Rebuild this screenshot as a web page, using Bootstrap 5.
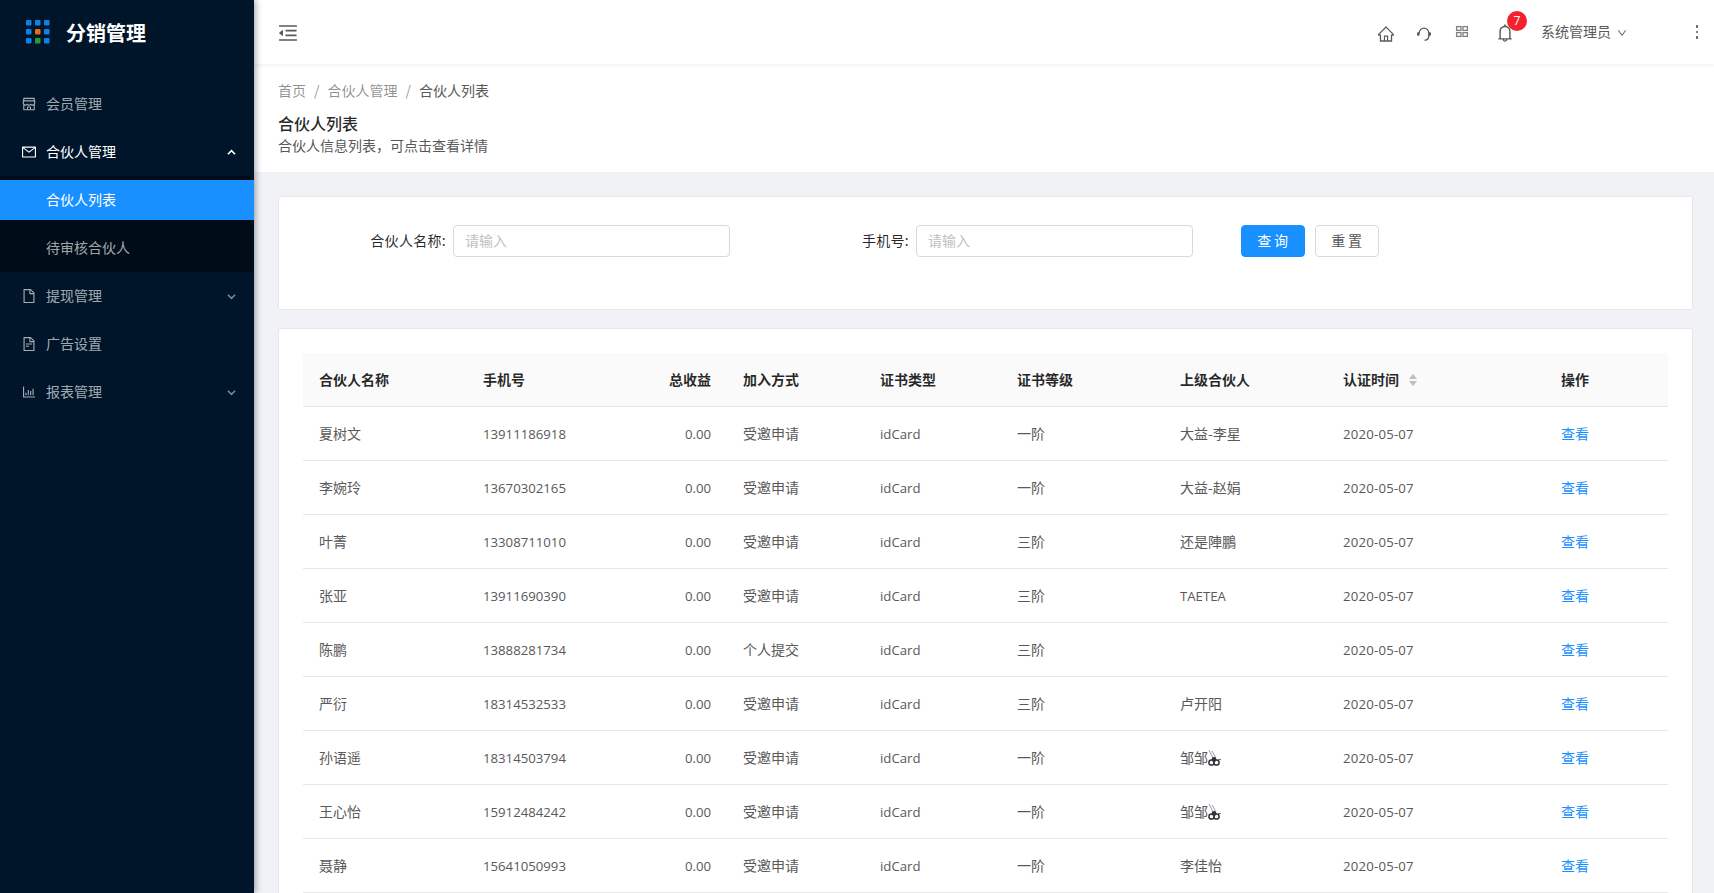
<!doctype html>
<html lang="zh"><head><meta charset="utf-8"><title>合伙人列表</title>
<link rel="stylesheet" href="https://cdn.jsdelivr.net/npm/bootstrap@5.3.0/dist/css/bootstrap.min.css">
<style>
html,body{height:100%;overflow:hidden}
body{font-family:"Noto Sans CJK SC",sans-serif;font-size:14px;color:#595959;background:#f0f2f5;line-height:21px}
.shell{height:100vh;overflow:hidden}
.side{width:254px;flex:none;background:#001529;box-shadow:2px 0 6px rgba(0,21,41,.35);position:relative;z-index:3;color:rgba(255,255,255,.65)}
.brand{height:64px;padding-left:26px;margin-bottom:16px;color:#fff;font-size:20px;font-weight:700}
.brand svg{margin-right:16px}
.mi{height:48px;padding-left:22px;padding-right:18px}
.mi>svg:first-child{width:14px;height:14px;margin-right:10px;fill:currentColor}
.mi span{margin-top:-2px}
.chev{width:9px;height:9px;margin-left:auto;opacity:.75}
.mi.open .chev{opacity:1}
.mi.open{color:#fff}
.subm{background:#000c17;padding:4px 0}
.si{height:40px;padding-left:46px;padding-bottom:2px;margin-bottom:8px}
.si:last-child{margin-bottom:0}
.si.on{background:#1890ff;color:#fff}
.main{min-width:0}
.topb{height:64px;background:#fff;box-shadow:0 1px 4px rgba(0,21,41,.08);position:relative;z-index:2;padding-left:24px}
.topb svg{fill:#595959}
.tog{margin-top:2px}
.tb-i{width:38px}
.tb-i svg{width:16px;height:16px}
.tb-down{margin-top:4px}
.tb-b{width:48px;margin-top:2px}
.tb-b svg{width:18px;height:18px}
.cnt{top:-13px;left:26px;width:20px;height:20px;background:#f5222d;color:#fff;font-size:12px;line-height:20px;font-family:"Open Sans",sans-serif}
.uname{margin-left:12px;margin-bottom:2px;width:70px;white-space:nowrap}
.uarr{width:10px;height:10px;margin-left:6px;margin-top:1px}
.more{margin-left:68px;margin-right:15px;width:4px;gap:3px}
.more i{width:2.5px;height:2.5px;background:#595959;display:block;border-radius:50%}
.phead{height:108px;background:#fff;padding:15px 24px 0}
.crumb{color:rgba(0,0,0,.45);gap:8px;height:22px;margin-bottom:9px}
.crumb span:last-child{color:#595959}
.ptit{font-size:16px;font-weight:500;color:rgba(0,0,0,.85);line-height:26px;margin:0}
.pdesc{line-height:18px;margin:0}
.body-w{padding:24px 21px 0 24px}
.pane{background:#fff;border:1px solid #e8e8e8;border-radius:2px}
.qpane{height:114px;padding:28px 0 0;margin-bottom:18px}
.fl{color:rgba(0,0,0,.85);text-align:right;padding-right:7px;padding-bottom:2px;white-space:nowrap;letter-spacing:.3px}
.fl1{width:174px}.fl2{width:186px}
.finput{width:277px;height:32px;border:1px solid #d9d9d9;border-radius:4px;padding:0 11px 2px;font-size:14px;font-family:inherit;color:#595959;box-shadow:none}
.finput::placeholder{color:#bfbfbf}
.bq,.br{width:64px;height:32px;border-radius:4px;padding:0 0 2px;font-size:14px;letter-spacing:2.8px;text-indent:2px}
.bq{background:#1890ff;border:1px solid #1890ff;color:#fff;margin-left:48px;margin-right:10px}
.br{background:#fff;border:1px solid #d9d9d9;color:#595959}
.tpane{padding:24px 24px 0;height:600px}
.dtab{table-layout:fixed;width:1365px;border-collapse:separate;border-spacing:0;margin:0;color:#595959}
.dtab th{background:#fafafa;color:rgba(0,0,0,.85);font-weight:700;padding:16px;height:54px;line-height:21px;border-bottom:1px solid #e8e8e8;white-space:nowrap}
.dtab th:first-child{border-top-left-radius:4px}
.dtab th:last-child{border-top-right-radius:4px}
.dtab td{padding:16px;height:54px;line-height:21px;border-bottom:1px solid #e8e8e8;background:#fff;color:#595959;white-space:nowrap}
.c1,.c2{width:164px}.c3{width:96px}.c4,.c5{width:137px}.c6,.c7{width:163px}.c8{width:218px}.c9{width:123px}
.dtab td.lat{font-family:"Open Sans","Noto Sans CJK SC",sans-serif;font-size:13.2px;padding-top:17px;padding-bottom:15px}
.dt{letter-spacing:.2px}
.vlink{color:#1890ff;text-decoration:none}
.sorter{display:inline-flex;flex-direction:column;gap:1.5px;margin-left:10px;vertical-align:middle;margin-top:-2px}
.sorter i{display:block;width:0;height:0;border-left:4.5px solid transparent;border-right:4.5px solid transparent}
.sorter i:first-child{border-bottom:5.5px solid #bfbfbf}
.sorter i:last-child{border-top:5.5px solid #bfbfbf}
.bee{width:14px;height:16px;vertical-align:-3px;margin-left:-1px}
</style></head><body>
<div class="shell d-flex">
<aside class="side">
  <div class="brand d-flex align-items-center">
    <svg width="24" height="24" viewBox="0 0 24 24"><g fill="#0a84e8"><rect x="0" y="0" width="5.5" height="5.5" rx="1"/><rect x="9" y="0" width="5.5" height="5.5" rx="1"/><rect x="18" y="0" width="5.5" height="5.5" rx="1"/><rect x="0" y="9" width="5.5" height="5.5" rx="1"/><rect x="18" y="9" width="5.5" height="5.5" rx="1"/><rect x="0" y="18" width="5.5" height="5.5" rx="1"/><rect x="18" y="18" width="5.5" height="5.5" rx="1"/></g><rect x="9" y="9" width="5.5" height="5.5" rx="1" fill="#f06a0f"/><rect x="9" y="18" width="5.5" height="5.5" rx="1" fill="#1f9d3f"/></svg>
    <span>分销管理</span>
  </div>
  <div class="mi d-flex align-items-center"><svg viewBox="64 64 896 896"><path d="M882 272.1V144c0-17.7-14.3-32-32-32H174c-17.7 0-32 14.3-32 32v128.1c-16.7 1-30 14.9-30 31.9v131.7a177 177 0 0 0 14.4 70.4c4.3 10.2 9.6 19.8 15.6 28.9v345c0 17.6 14.3 32 32 32h676c17.7 0 32-14.3 32-32V535a175 175 0 0 0 15.6-28.9c9.5-22.3 14.4-46 14.4-70.4V304c0-17-13.3-30.9-30-31.9zM214 184h596v88H214v-88zm362 656.1H448V736h128v104.1zm234 0H640V704c0-17.7-14.3-32-32-32H416c-17.7 0-32 14.3-32 32v136.1H214V597.9c2.9 1.4 5.9 2.8 9 4 22.3 9.4 46 14.1 70.4 14.1s48-4.7 70.4-14.1c13.8-5.8 26.8-13.2 38.7-22.1.2-.1.4-.1.6 0a180.4 180.4 0 0 0 38.7 22.1c22.3 9.4 46 14.1 70.4 14.1 24.4 0 48-4.7 70.4-14.1 13.8-5.8 26.8-13.2 38.7-22.1.2-.1.4-.1.6 0a180.4 180.4 0 0 0 38.7 22.1c22.3 9.4 46 14.1 70.4 14.1 24.4 0 48-4.7 70.4-14.1 3-1.3 6-2.6 9-4v242.2zm30-404.4c0 59.8-49 108.3-109.3 108.3-40.8 0-76.4-22.1-95.2-54.9-2.9-5-8.1-8.1-13.9-8.1h-.6c-5.7 0-11 3.1-13.9 8.1A109.24 109.24 0 0 1 512 544c-40.7 0-76.2-22-95-54.7-3-5.1-8.4-8.3-14.3-8.3s-11.4 3.2-14.3 8.3a109.63 109.63 0 0 1-95.1 54.7C233 544 184 495.5 184 435.7v-91.2c0-.3.2-.5.5-.5h655c.3 0 .5.2.5.5v91.2z"/></svg><span>会员管理</span></div>
  <div class="mi open d-flex align-items-center"><svg viewBox="64 64 896 896"><path d="M928 160H96c-17.7 0-32 14.3-32 32v640c0 17.7 14.3 32 32 32h832c17.7 0 32-14.3 32-32V192c0-17.7-14.3-32-32-32zm-40 110.8V792H136V270.8l-27.6-21.5 39.3-50.5 42.8 33.3h643.1l42.8-33.3 39.3 50.5-27.7 21.5zM833.6 232L512 482 190.4 232l-42.8-33.3-39.3 50.5 27.6 21.5 341.6 265.6a55.99 55.99 0 0 0 68.7 0L888 270.8l27.6-21.5-39.3-50.5-42.7 33.2z"/></svg><span>合伙人管理</span><svg class="chev" viewBox="0 0 10 10"><path d="M1 7 L5 3 L9 7" fill="none" stroke="currentColor" stroke-width="1.8"/></svg></div>
  <div class="subm">
    <div class="si on d-flex align-items-center">合伙人列表</div>
    <div class="si d-flex align-items-center">待审核合伙人</div>
  </div>
  <div class="mi d-flex align-items-center"><svg viewBox="64 64 896 896"><path d="M854.6 288.6L639.4 73.4c-6-6-14.1-9.4-22.6-9.4H192c-17.7 0-32 14.3-32 32v832c0 17.7 14.3 32 32 32h640c17.7 0 32-14.3 32-32V311.3c0-8.5-3.4-16.7-9.4-22.7zM790.2 326H602V137.8L790.2 326zm1.8 562H232V136h302v216a42 42 0 0 0 42 42h216v494z"/></svg><span>提现管理</span><svg class="chev" viewBox="0 0 10 10"><path d="M1 3 L5 7 L9 3" fill="none" stroke="currentColor" stroke-width="1.8"/></svg></div>
  <div class="mi d-flex align-items-center"><svg viewBox="64 64 896 896"><path d="M854.6 288.6L639.4 73.4c-6-6-14.1-9.4-22.6-9.4H192c-17.7 0-32 14.3-32 32v832c0 17.7 14.3 32 32 32h640c17.7 0 32-14.3 32-32V311.3c0-8.5-3.4-16.7-9.4-22.7zM790.2 326H602V137.8L790.2 326zm1.8 562H232V136h302v216a42 42 0 0 0 42 42h216v494zM504 618H320c-4.4 0-8 3.6-8 8v48c0 4.4 3.6 8 8 8h184c4.4 0 8-3.6 8-8v-48c0-4.4-3.6-8-8-8zM312 490v48c0 4.4 3.6 8 8 8h384c4.4 0 8-3.6 8-8v-48c0-4.4-3.6-8-8-8H320c-4.4 0-8 3.6-8 8z"/></svg><span>广告设置</span></div>
  <div class="mi d-flex align-items-center"><svg viewBox="64 64 896 896"><path d="M888 792H200V168c0-4.4-3.6-8-8-8h-56c-4.4 0-8 3.6-8 8v688c0 4.4 3.6 8 8 8h752c4.4 0 8-3.6 8-8v-56c0-4.4-3.6-8-8-8zm-600-80h56c4.4 0 8-3.6 8-8V560c0-4.4-3.6-8-8-8h-56c-4.4 0-8 3.6-8 8v144c0 4.4 3.6 8 8 8zm152 0h56c4.4 0 8-3.6 8-8V384c0-4.4-3.6-8-8-8h-56c-4.4 0-8 3.6-8 8v320c0 4.4 3.6 8 8 8zm152 0h56c4.4 0 8-3.6 8-8V462c0-4.4-3.6-8-8-8h-56c-4.4 0-8 3.6-8 8v242c0 4.4 3.6 8 8 8zm152 0h56c4.4 0 8-3.6 8-8V304c0-4.4-3.6-8-8-8h-56c-4.4 0-8 3.6-8 8v400c0 4.4 3.6 8 8 8z"/></svg><span>报表管理</span><svg class="chev" viewBox="0 0 10 10"><path d="M1 3 L5 7 L9 3" fill="none" stroke="currentColor" stroke-width="1.8"/></svg></div>
</aside>
<div class="main flex-grow-1">
  <header class="topb d-flex align-items-center">
    <svg class="tog" width="20" height="20" viewBox="64 64 896 896"><path d="M408 442h480c4.4 0 8-3.6 8-8v-56c0-4.4-3.6-8-8-8H408c-4.4 0-8 3.6-8 8v56c0 4.4 3.6 8 8 8zm-8 204c0 4.4 3.6 8 8 8h480c4.4 0 8-3.6 8-8v-56c0-4.4-3.6-8-8-8H408c-4.4 0-8 3.6-8 8v56zm504-486H120c-4.4 0-8 3.6-8 8v56c0 4.4 3.6 8 8 8h784c4.4 0 8-3.6 8-8v-56c0-4.4-3.6-8-8-8zm0 632H120c-4.4 0-8 3.6-8 8v56c0 4.4 3.6 8 8 8h784c4.4 0 8-3.6 8-8v-56c0-4.4-3.6-8-8-8zM115.4 518.9L271.7 642c5.8 4.6 14.4.5 14.4-6.9V388.9c0-7.4-8.5-11.5-14.4-6.9L115.4 505.1a8.74 8.74 0 0 0 0 13.8z"/></svg>
    <div class="ms-auto d-flex align-items-center">
      <div class="tb-i tb-down d-flex justify-content-center"><svg viewBox="64 64 896 896"><path d="M946.5 505L560.1 118.8l-25.9-25.9a31.5 31.5 0 0 0-44.4 0L77.5 505a63.9 63.9 0 0 0-18.8 46c.4 35.2 29.7 63.3 64.9 63.3h42.5V940h691.8V614.3h43.4c17.1 0 33.2-6.7 45.3-18.8a63.6 63.6 0 0 0 18.7-45.3c0-17-6.7-33.1-18.8-45.2zM568 868H456V664h112v204zm217.9-325.7V868H632V640c0-22.1-17.9-40-40-40H432c-22.1 0-40 17.9-40 40v228H238.1V542.3h-96l370-369.7 23.1 23.1L882 542.3h-96.1z"/></svg></div>
      <div class="tb-i tb-down d-flex justify-content-center"><svg viewBox="0 0 16 16"><path d="M3.2 7 A4.8 4.8 0 0 1 12.8 7 V10.2 C12.8 12.6 11 14 8.6 14.4" fill="none" stroke="#595959" stroke-width="1.3"/><rect x="1" y="6.2" width="2.6" height="3.6" rx="1" fill="#595959"/><rect x="12.4" y="6.2" width="2.6" height="3.6" rx="1" fill="#595959"/></svg></div>
      <div class="tb-i d-flex justify-content-center"><svg viewBox="0 0 16 16"><g fill="none" stroke="#808080" stroke-width="1.3"><rect x="2.6" y="2.6" width="4.4" height="3.8"/><rect x="9" y="2.6" width="4.4" height="3.8"/><rect x="2.6" y="8.6" width="4.4" height="3.8"/><rect x="9" y="8.6" width="4.4" height="3.8"/></g></svg></div>
      <div class="tb-b d-flex justify-content-center position-relative"><svg viewBox="64 64 896 896"><path d="M816 768h-24V428c0-141.1-104.3-257.7-240-277.1V112c0-22.1-17.9-40-40-40s-40 17.9-40 40v38.9c-135.7 19.4-240 136-240 277.1v340h-24c-17.7 0-32 14.3-32 32v32c0 4.4 3.6 8 8 8h216c0 61.8 50.2 112 112 112s112-50.2 112-112h216c4.4 0 8-3.6 8-8v-32c0-17.7-14.3-32-32-32zM512 888c-26.5 0-48-21.5-48-48h96c0 26.5-21.5 48-48 48zM304 768V428c0-55.6 21.6-107.8 60.9-147.1S456.4 220 512 220c55.6 0 107.8 21.6 147.1 60.9S720 372.4 720 428v340H304z"/></svg><span class="cnt position-absolute rounded-circle text-center">7</span></div>
      <span class="uname">系统管理员</span>
      <svg class="uarr" viewBox="64 64 896 896"><path d="M884 256h-75c-5.1 0-9.9 2.5-12.9 6.6L512 654.2 227.9 262.6c-3-4.1-7.8-6.6-12.9-6.6h-75c-6.5 0-10.3 7.4-6.5 12.7l352.6 486.1c12.8 17.6 39 17.6 51.7 0l352.6-486.1c3.9-5.3.1-12.7-6.4-12.7z"/></svg>
      <div class="more d-flex flex-column align-items-center"><i></i><i></i><i></i></div>
    </div>
  </header>
  <section class="phead">
    <div class="crumb d-flex align-items-center"><span>首页</span><span>/</span><span>合伙人管理</span><span>/</span><span>合伙人列表</span></div>
    <h1 class="ptit">合伙人列表</h1>
    <p class="pdesc">合伙人信息列表，可点击查看详情</p>
  </section>
  <div class="body-w">
    <div class="pane qpane d-flex align-items-start">
      <div class="d-flex align-items-center"><label class="fl fl1">合伙人名称:</label><input class="finput form-control" placeholder="请输入"></div>
      <div class="d-flex align-items-center"><label class="fl fl2">手机号:</label><input class="finput form-control" placeholder="请输入"></div>
      <button class="btn bq">查询</button><button class="btn br">重置</button>
    </div>
    <div class="pane tpane">
      <table class="table dtab">
        <colgroup><col class="c1"><col class="c2"><col class="c3"><col class="c4"><col class="c5"><col class="c6"><col class="c7"><col class="c8"><col class="c9"></colgroup>
        <thead><tr><th>合伙人名称</th><th>手机号</th><th class="text-end">总收益</th><th>加入方式</th><th>证书类型</th><th>证书等级</th><th>上级合伙人</th><th>认证时间<span class="sorter"><i></i><i></i></span></th><th>操作</th></tr></thead>
        <tbody>
<tr><td>夏树文</td><td class="lat">13911186918</td><td class="lat text-end">0.00</td><td>受邀申请</td><td class="lat">idCard</td><td>一阶</td><td>大益-李星</td><td class="lat dt">2020-05-07</td><td><a class="vlink" href="#">查看</a></td></tr>
<tr><td>李婉玲</td><td class="lat">13670302165</td><td class="lat text-end">0.00</td><td>受邀申请</td><td class="lat">idCard</td><td>一阶</td><td>大益-赵娟</td><td class="lat dt">2020-05-07</td><td><a class="vlink" href="#">查看</a></td></tr>
<tr><td>叶菁</td><td class="lat">13308711010</td><td class="lat text-end">0.00</td><td>受邀申请</td><td class="lat">idCard</td><td>三阶</td><td>还是陣鵬</td><td class="lat dt">2020-05-07</td><td><a class="vlink" href="#">查看</a></td></tr>
<tr><td>张亚</td><td class="lat">13911690390</td><td class="lat text-end">0.00</td><td>受邀申请</td><td class="lat">idCard</td><td>三阶</td><td class="lat">TAETEA</td><td class="lat dt">2020-05-07</td><td><a class="vlink" href="#">查看</a></td></tr>
<tr><td>陈鹏</td><td class="lat">13888281734</td><td class="lat text-end">0.00</td><td>个人提交</td><td class="lat">idCard</td><td>三阶</td><td></td><td class="lat dt">2020-05-07</td><td><a class="vlink" href="#">查看</a></td></tr>
<tr><td>严衍</td><td class="lat">18314532533</td><td class="lat text-end">0.00</td><td>受邀申请</td><td class="lat">idCard</td><td>三阶</td><td>卢开阳</td><td class="lat dt">2020-05-07</td><td><a class="vlink" href="#">查看</a></td></tr>
<tr><td>孙语遥</td><td class="lat">18314503794</td><td class="lat text-end">0.00</td><td>受邀申请</td><td class="lat">idCard</td><td>一阶</td><td>邹邹<svg class="bee" viewBox="0 0 14 16"><path d="M2 0 L7 10 M5 1 L9 8" stroke="#999" stroke-width="1" fill="none"/><circle cx="4.5" cy="12.5" r="2.6" fill="none" stroke="#333" stroke-width="1.5"/><circle cx="9.5" cy="12.5" r="2.6" fill="none" stroke="#333" stroke-width="1.5"/><circle cx="7" cy="9.5" r="2.4" fill="#333"/><path d="M10.5 9.5h3.5" stroke="#777"/></svg></td><td class="lat dt">2020-05-07</td><td><a class="vlink" href="#">查看</a></td></tr>
<tr><td>王心怡</td><td class="lat">15912484242</td><td class="lat text-end">0.00</td><td>受邀申请</td><td class="lat">idCard</td><td>一阶</td><td>邹邹<svg class="bee" viewBox="0 0 14 16"><path d="M2 0 L7 10 M5 1 L9 8" stroke="#999" stroke-width="1" fill="none"/><circle cx="4.5" cy="12.5" r="2.6" fill="none" stroke="#333" stroke-width="1.5"/><circle cx="9.5" cy="12.5" r="2.6" fill="none" stroke="#333" stroke-width="1.5"/><circle cx="7" cy="9.5" r="2.4" fill="#333"/><path d="M10.5 9.5h3.5" stroke="#777"/></svg></td><td class="lat dt">2020-05-07</td><td><a class="vlink" href="#">查看</a></td></tr>
<tr><td>聂静</td><td class="lat">15641050993</td><td class="lat text-end">0.00</td><td>受邀申请</td><td class="lat">idCard</td><td>一阶</td><td>李佳怡</td><td class="lat dt">2020-05-07</td><td><a class="vlink" href="#">查看</a></td></tr>
        </tbody>
      </table>
    </div>
  </div>
</div>
</div>
<script src="https://cdn.jsdelivr.net/npm/bootstrap@5.3.0/dist/js/bootstrap.bundle.min.js"></script>
</body></html>
